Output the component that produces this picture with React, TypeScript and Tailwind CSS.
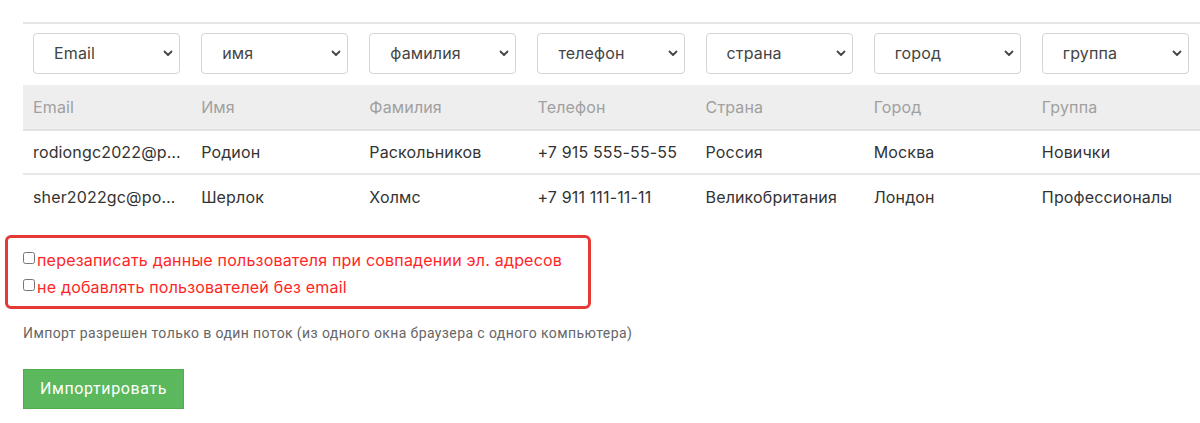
const mappings = ['Email', 'имя', 'фамилия', 'телефон', 'страна', 'город', 'группа']
const headers = ['Email', 'Имя', 'Фамилия', 'Телефон', 'Страна', 'Город', 'Группа']
const rows = [
  ['rodiongc2022@post.ru', 'Родион', 'Раскольников', '+7 915 555-55-55', 'Россия', 'Москва', 'Новички'],
  ['sher2022gc@post.uk', 'Шерлок', 'Холмс', '+7 911 111-11-11', 'Великобритания', 'Лондон', 'Профессионалы'],
]

function Chevron() {
  return (
    <svg className="pointer-events-none absolute right-[6px] top-1/2 -translate-y-1/2" width="12" height="12" viewBox="0 0 12 12">
      <path d="M2.5 4.5 L6 8 L9.5 4.5" fill="none" stroke="#444" strokeWidth="1.8" strokeLinecap="round" strokeLinejoin="round" />
    </svg>
  )
}

export default function App() {
  return (
    <div className="w-[1200px] h-[423px] overflow-hidden bg-white font-['Inter',sans-serif] text-[#333]">
      <div className="pt-[22px] pl-[23px]">
        <table className="table-fixed w-[1177px] border-collapse text-[16px] tracking-[0.15px]">
          <tbody>
            <tr className="border-t-2 border-[#e6e6e6]">
              {mappings.map((m) => (
                <td key={m} className="pl-[10px] pr-[11px] pt-[8px] pb-[11px] h-[62px]">
                  <div className="relative">
                    <select className="appearance-none w-full h-[41px] pl-[20px] pr-6 rounded-[4px] border border-[#d4d4d4] bg-white text-[16px] text-[#444] outline-none">
                      <option>{m}</option>
                    </select>
                    <Chevron />
                  </div>
                </td>
              ))}
            </tr>
            <tr className="bg-[#eeeeee] border-b-2 border-[#e2e2e2]">
              {headers.map((h) => (
                <td key={h} className="pl-[10px] h-[45px] text-[#a0a0a0] font-normal">{h}</td>
              ))}
            </tr>
            {rows.map((r, i) => (
              <tr key={i} className={i === 0 ? 'border-b-2 border-[#e8e8e8]' : ''}>
                {r.map((c, j) => (
                  <td key={j} className="pl-[10px] pr-[8px] h-[44px] truncate">{c}</td>
                ))}
              </tr>
            ))}
          </tbody>
        </table>
      </div>

      <div className="ml-[5px] mt-[17px] w-[586px] h-[74px] border-[3px] border-[#e53935] rounded-[6px] pl-[15px] pt-[9px] text-[16px] text-[#ff2626] leading-[27px] tracking-[0.2px]">
        <label className="flex items-center">
          <input type="checkbox" className="w-[12px] h-[12px] mr-[2px] -mt-[6px] accent-gray-500" />
          <span>перезаписать данные пользователя при совпадении эл. адресов</span>
        </label>
        <label className="flex items-center">
          <input type="checkbox" className="w-[12px] h-[12px] mr-[2px] -mt-[6px] accent-gray-500" />
          <span>не добавлять пользователей без email</span>
        </label>
      </div>

      <p className="ml-[23px] mt-[14px] text-[14px] text-[#666] font-['Roboto',sans-serif] leading-[20px] tracking-[0.4px]">
        Импорт разрешен только в один поток (из одного окна браузера с одного компьютера)
      </p>

      <button className="ml-[23px] mt-[26px] w-[161px] h-[40px] bg-[#5cb85c] border border-[#4cae4c] text-white text-[16px] font-['Roboto',sans-serif] tracking-[0.6px]">
        Импортировать
      </button>
    </div>
  )
}
